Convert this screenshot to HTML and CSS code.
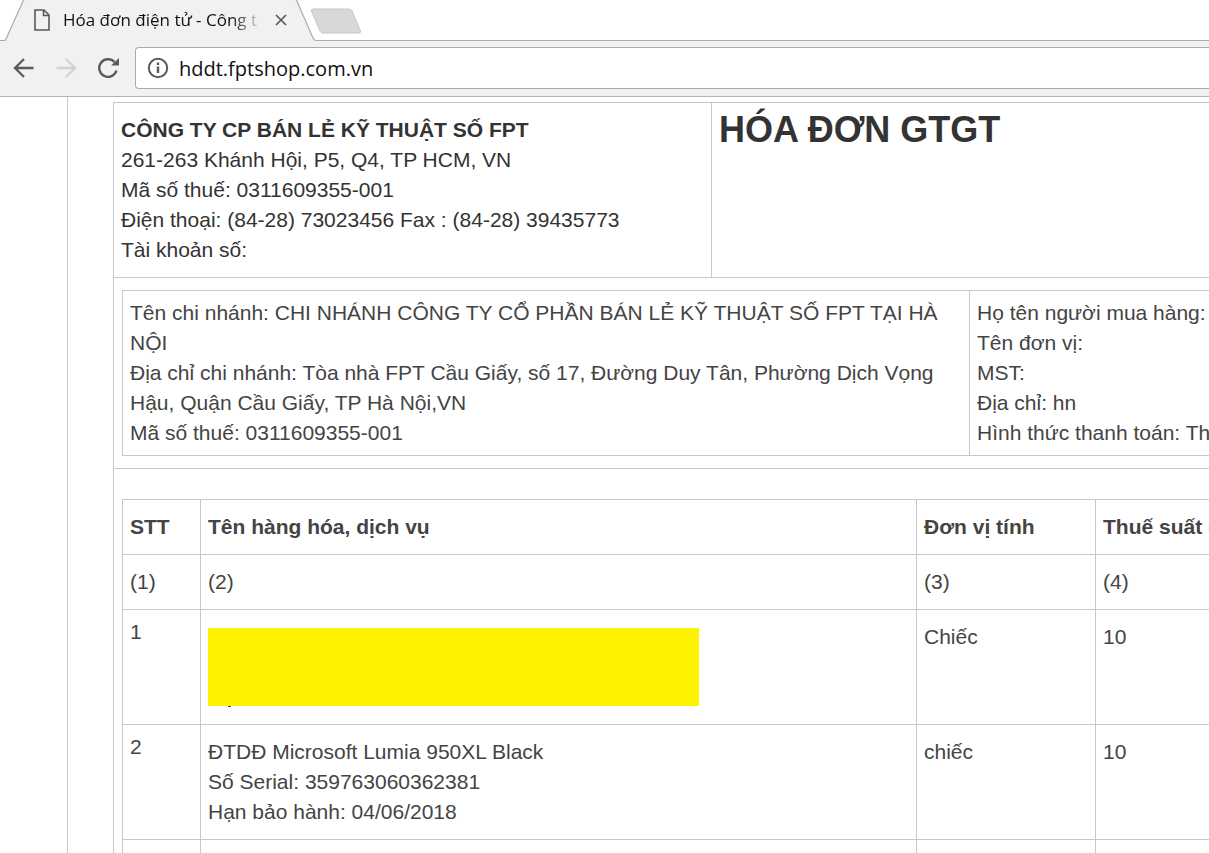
FILE: index.html
```html
<!DOCTYPE html>
<html lang="vi">
<head>
  <meta charset="UTF-8" />
  <title>Hóa đơn điện tử - Công ty</title>
  <link rel="stylesheet" href="styles.css">
</head>
<body>

  <header class="browser">
    <div class="tab-strip">
      <div class="tab">
        <svg class="tab-shape" width="320" height="41" viewBox="0 0 320 41">
          <path d="M5 41 L6 40 L24 0 H296 L313 39 L316 41 Z" fill="#f1f1f1"/>
          <path d="M0 40.5 H4 Q5.500 40.500 6.500 38 L24 -1 M296 -1 L313 38 Q314 40.500 316 40.500 H320" fill="none" stroke="#acacac" stroke-width="1.200"/>
        </svg>
        <svg class="tab-icon" width="16" height="22" viewBox="0 0 16 22">
          <path d="M1 1 H10 L15 6 V21 H1 Z M9.500 1 V6.500 H15" fill="none" stroke="#5a5a5a" stroke-width="1.600"/>
        </svg>
        <span class="tab-title">Hóa đơn điện tử - Công t</span>
        <button class="tab-close" type="button" aria-label="Đóng">
          <svg width="12" height="12" viewBox="0 0 12 12">
            <path d="M1 1 L11 11 M11 1 L1 11" stroke="#5a5a5a" stroke-width="1.700"/>
          </svg>
        </button>
      </div>
      <button class="new-tab" type="button" aria-label="Thẻ mới">
        <svg width="52" height="26" viewBox="0 0 52 26">
          <path d="M3 1 H39 Q41 1 42 3 L50.500 23 Q51 25 49 25 H13 Q11 25 10 23 L1.500 3 Q1 1 3 1 Z" fill="#d8d8d8" stroke="#c6c6c6"/>
        </svg>
      </button>
    </div>

    <div class="toolbar">
      <button class="nav-btn" type="button" aria-label="Quay lại">
        <svg width="22" height="22" viewBox="0 0 22 22">
          <path d="M20.500 11 H2.500 M11 2 L2 11 L11 20" fill="none" stroke="#5a5a5a" stroke-width="2.300"/>
        </svg>
      </button>
      <button class="nav-btn" type="button" aria-label="Tiến" disabled>
        <svg width="22" height="22" viewBox="0 0 22 22">
          <path d="M1.500 11 H19.500 M11 2 L20 11 L11 20" fill="none" stroke="#d2d2d2" stroke-width="2.300"/>
        </svg>
      </button>
      <button class="nav-btn" type="button" aria-label="Tải lại">
        <svg width="22" height="22" viewBox="0 0 22 22">
          <path d="M19.500 13.500 A8.800 8.800 0 1 1 17.500 5" fill="none" stroke="#5a5a5a" stroke-width="2.400"/>
          <path d="M22 1 V8.500 H14 Z" fill="#5a5a5a"/>
        </svg>
      </button>
      <label class="address">
        <svg width="22" height="22" viewBox="0 0 22 22">
          <circle cx="11" cy="11" r="9.200" fill="none" stroke="#5a5a5a" stroke-width="2"/>
          <path d="M11 9.500 V16 M11 5.500 V8" stroke="#5a5a5a" stroke-width="2.400"/>
        </svg>
        <input type="text" value="hddt.fptshop.com.vn" aria-label="Địa chỉ trang web" />
      </label>
    </div>
  </header>

  <main class="page">
    <div class="invoice">

      <section class="invoice-head">
        <div class="seller">
          <strong>CÔNG TY CP BÁN LẺ KỸ THUẬT SỐ FPT</strong><br>
          261-263 Khánh Hội, P5, Q4, TP HCM, VN<br>
          Mã số thuế: 0311609355-001<br>
          Điện thoại: (84-28) 73023456 Fax : (84-28) 39435773<br>
          Tài khoản số:
        </div>
        <h1>HÓA ĐƠN GTGT</h1>
      </section>

      <section class="parties">
        <div class="parties-box">
          <div class="branch">
            Tên chi nhánh: CHI NHÁNH CÔNG TY CỔ PHẦN BÁN LẺ KỸ THUẬT SỐ FPT TẠI HÀ NỘI<br>
            Địa chỉ chi nhánh: Tòa nhà FPT Cầu Giấy, số 17, Đường Duy Tân, Phường Dịch Vọng Hậu, Quận Cầu Giấy, TP Hà Nội,VN<br>
            Mã số thuế: 0311609355-001
          </div>
          <div class="buyer">
            Họ tên người mua hàng:<br>
            Tên đơn vị:<br>
            MST:<br>
            Địa chỉ: hn<br>
            Hình thức thanh toán: Th
          </div>
        </div>
      </section>

      <section class="goods">
        <table class="items">
          <colgroup>
            <col class="col-no">
            <col class="col-name">
            <col class="col-unit">
            <col class="col-tax">
          </colgroup>
          <thead>
            <tr>
              <th>STT</th>
              <th>Tên hàng hóa, dịch vụ</th>
              <th>Đơn vị tính</th>
              <th>Thuế suất (</th>
            </tr>
          </thead>
          <tbody>
            <tr>
              <td>(1)</td>
              <td>(2)</td>
              <td>(3)</td>
              <td>(4)</td>
            </tr>
            <tr>
              <td class="no">1</td>
              <td><div class="redacted"></div></td>
              <td>Chiếc</td>
              <td>10</td>
            </tr>
            <tr>
              <td class="no">2</td>
              <td>
                ĐTDĐ Microsoft Lumia 950XL Black<br>
                Số Serial: 359763060362381<br>
                Hạn bảo hành: 04/06/2018
              </td>
              <td>chiếc</td>
              <td>10</td>
            </tr>
            <tr class="blank">
              <td></td>
              <td></td>
              <td></td>
              <td></td>
            </tr>
          </tbody>
        </table>
      </section>

    </div>
  </main>

</body>
</html>
```
FILE: styles.css
```css
* {
  box-sizing: border-box;
}

body {
  margin: 0;
  height: 100vh;
  display: flex;
  flex-direction: column;
  overflow: hidden;
  background: #fff;
  color: #444;
  font-family: "Liberation Sans", Arial, sans-serif;
  font-size: 21px;
  line-height: 30px;
}

button {
  padding: 0;
  border: none;
  background: none;
  display: flex;
}

/* browser bar */
.browser {
  flex: none;
  font-family: "Open Sans", "Noto Sans", sans-serif;
  color: #111;
}

.tab-strip {
  display: flex;
  height: 41px;
  border-bottom: 1px solid #acacac;
}

.tab {
  position: relative;
  width: 310px;
  height: 40px;
  padding-left: 34px;
  display: flex;
  align-items: center;
}

.tab-shape {
  position: absolute;
  left: 0;
  top: 0;
}

.tab-icon,
.tab-title,
.tab-close {
  position: relative;
}

.tab-title {
  width: 200px;
  margin: 0 12px 0 13px;
  font-size: 17px;
  white-space: nowrap;
  overflow: hidden;
  -webkit-mask-image: linear-gradient(to right, #000 84%, transparent);
  mask-image: linear-gradient(to right, #000 84%, transparent);
}

.new-tab {
  position: relative;
  align-items: center;
  padding-top: 2px;
}

.toolbar {
  display: flex;
  align-items: center;
  gap: 20px;
  height: 56px;
  padding: 0 0 2px 13px;
  background: #f1f1f1;
  border-bottom: 1px solid #b4b4b4;
}

.address {
  flex: 1;
  height: 42px;
  margin-left: -4px;
  padding-left: 11px;
  display: flex;
  align-items: center;
  gap: 10px;
  background: #fff;
  border: 1px solid #a9a9a9;
  border-right: none;
  border-radius: 4px 0 0 4px;
}

.address input {
  flex: 1;
  padding: 2px 0 0;
  border: none;
  outline: none;
  background: none;
  color: #111;
  font-family: inherit;
  font-size: 20px;
}

/* invoice, wider than the window */
.page {
  flex: 1;
  margin-left: 67px;
  padding: 5px 0 0 45px;
  border-left: 1px solid #c8c8c8;
  overflow: hidden;
}

.invoice {
  width: 130%;
  height: 120%;
  border: 1px solid #c8c8c8;
}

.invoice-head {
  display: grid;
  grid-template-columns: 598px 1fr;
  color: #333;
}

.seller {
  padding: 12px 7px;
  border-right: 1px solid #c8c8c8;
}

h1 {
  margin: 0;
  padding: 0 7px;
  font-size: 36px;
  line-height: 54px;
}

.parties {
  padding: 12px 8px;
  border-top: 1px solid #c8c8c8;
  border-bottom: 1px solid #c8c8c8;
}

.parties-box {
  display: grid;
  grid-template-columns: 847px 1fr;
  border: 1px solid #c8c8c8;
}

.branch,
.buyer {
  padding: 7px;
}

.branch {
  border-right: 1px solid #c8c8c8;
}

.goods {
  padding: 30px 8px;
}

.items {
  width: 100%;
  table-layout: fixed;
  border-collapse: separate;
  border-spacing: 0;
  border-top: 1px solid #c8c8c8;
  border-left: 1px solid #c8c8c8;
}

.col-no {
  width: 78px;
}

.col-name {
  width: 716px;
}

.col-unit {
  width: 179px;
}

.items th,
.items td {
  padding: 12px 7px;
  border-right: 1px solid #c8c8c8;
  border-bottom: 1px solid #c8c8c8;
  text-align: left;
  vertical-align: top;
}

.items .no {
  padding-top: 7px;
}

.blank td {
  height: 115px;
}

.redacted {
  position: relative;
  width: 491px;
  height: 78px;
  margin: 6px 0;
  background: #fff200;
}

/* tail of the covered line */
.redacted::after {
  content: "";
  position: absolute;
  left: 20px;
  top: 100%;
  width: 3px;
  height: 1px;
  background: #444;
}
```
